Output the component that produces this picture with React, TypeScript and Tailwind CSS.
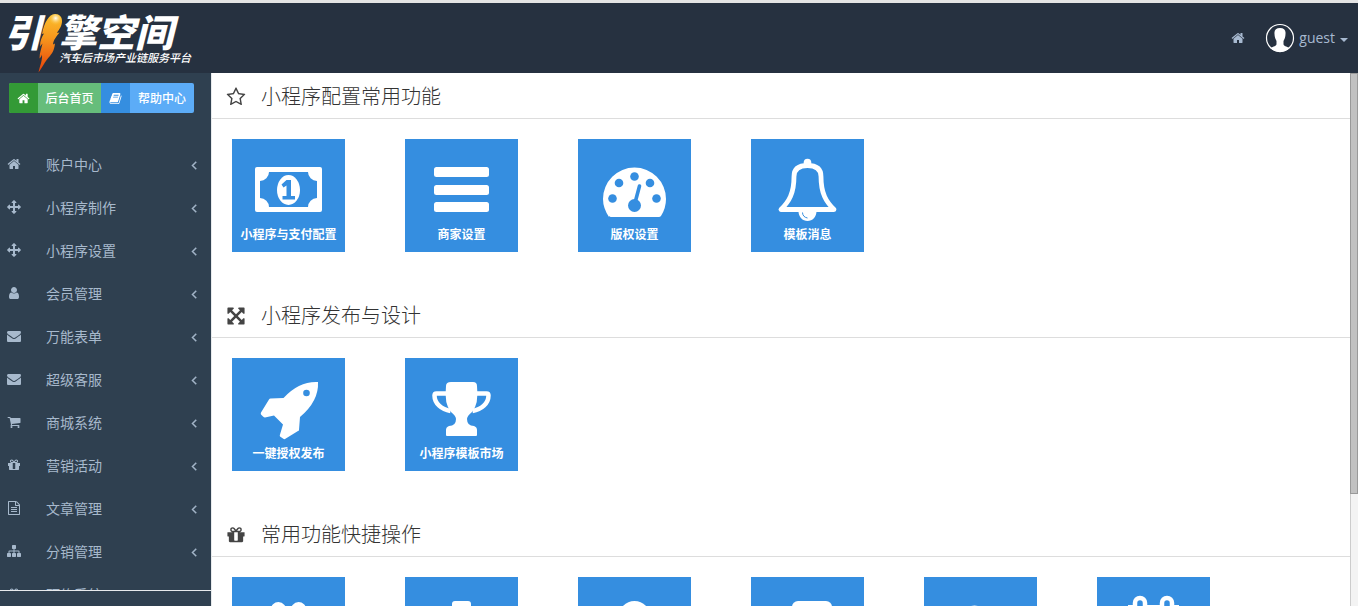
import { ReactNode } from "react";

interface IconProps {
  path: string;
  className?: string;
}

interface Tile {
  label: string;
  icon: ReactNode;
}

interface SectionProps {
  title: string;
  icon: string;
  tiles: Tile[];
}

// Font Awesome 4 shapes, all drawn on a 1792 grid
const icons = {
  home: "M1472 992v480q0 26-19 45t-45 19h-384v-384h-256v384h-384q-26 0-45-19t-19-45v-480q0-1 .5-3t.5-3l575-474 575 474q1 2 1 6zm223-69l-62 74q-8 9-21 11h-3q-13 0-21-7l-692-577-692 577q-12 8-24 7-13-2-21-11l-62-74q-8-10-7-23.5t11-21.5l719-599q32-26 76-26t76 26l244 204v-195q0-14 9-23t23-9h192q14 0 23 9t9 23v408l219 182q10 8 11 21.5t-7 23.5z",
  arrows:
    "M1792 896q0 26-19 45l-256 256q-19 19-45 19t-45-19-19-45v-128h-384v384h128q26 0 45 19t19 45-19 45l-256 256q-19 19-45 19t-45-19l-256-256q-19-19-19-45t19-45 45-19h128v-384h-384v128q0 26-19 45t-45 19-45-19l-256-256q-19-19-19-45t19-45l256-256q19-19 45-19t45 19 19 45v128h384v-384h-128q-26 0-45-19t-19-45 19-45l256-256q19-19 45-19t45 19l256 256q19 19 19 45t-19 45-45 19h-128v384h384v-128q0-26 19-45t45-19 45 19l256 256q19 19 19 45z",
  user: "M1536 1399q0 109-62.5 187t-150.5 78h-854q-88 0-150.5-78t-62.5-187q0-85 8.5-160.5t31.5-152 58.5-131 94-89 134.5-34.5q131 128 313 128t313-128q76 0 134.5 34.5t94 89 58.5 131 31.5 152 8.5 160.5zm-256-887q0 159-112.5 271.5t-271.5 112.5-271.5-112.5-112.5-271.5 112.5-271.5 271.5-112.5 271.5 112.5 112.5 271.5z",
  envelope:
    "M1792 710v794q0 66-47 113t-113 47h-1472q-66 0-113-47t-47-113v-794q44 49 101 87 362 246 497 345 57 42 92.5 65.5t94.5 48 110 24.5h2q51 0 110-24.5t94.5-48 92.5-65.5q170-123 498-345 57-39 100-87zm0-294q0 79-49 151t-122 123q-376 261-468 325-10 7-42.5 31t-54 38.5-52 32.5-57.5 27-50 9h-2q-23 0-50-9t-57.5-27-52-32.5-54-38.5-42.5-31q-91-64-262-182.5t-205-142.5q-62-42-117-115.5t-55-136.5q0-78 41.5-130t118.5-52h1472q65 0 112.5 47t47.5 113z",
  cart: "M704 1536q0 52-38 90t-90 38-90-38-38-90 38-90 90-38 90 38 38 90zm896 0q0 52-38 90t-90 38-90-38-38-90 38-90 90-38 90 38 38 90zm128-1088v512q0 24-16.5 42.5t-40.5 21.5l-1044 122q13 60 13 70 0 16-24 64h920q26 0 45 19t19 45-19 45-45 19h-1024q-26 0-45-19t-19-45q0-11 8-31.5t16-36 21.5-40 15.5-29.5l-177-823h-204q-26 0-45-19t-19-45 19-45 45-19h256q16 0 28.5 6.5t19.5 15.5 13 24.5 8 26 5.5 29.5 4.5 26h1201q26 0 45 19t19 45z",
  gift: "M1056 1356v-716h-320v716q0 25 18 38.5t46 13.5h192q28 0 46-13.5t18-38.5zm-456-844h195l-126-161q-26-31-69-31-40 0-68 28t-28 68 28 68 68 28zm688-96q0-40-28-68t-68-28q-43 0-69 31l-125 161h194q40 0 68-28t28-68zm376 256v320q0 14-9 23t-23 9h-96v416q0 40-28 68t-68 28h-1088q-40 0-68-28t-28-68v-416h-96q-14 0-23-9t-9-23v-320q0-14 9-23t23-9h440q-93 0-158.5-65.5t-65.5-158.5 65.5-158.5 158.5-65.5q107 0 168 77l128 165 128-165q61-77 168-77 93 0 158.5 65.5t65.5 158.5-65.5 158.5-158.5 65.5h440q14 0 23 9t9 23z",
  file: "M1596 380q28 28 48 76t20 88v1152q0 40-28 68t-68 28h-1344q-40 0-68-28t-28-68v-1600q0-40 28-68t68-28h896q40 0 88 20t76 48zm-444-244v376h376q-10-29-22-41l-313-313q-12-12-41-22zm384 1528v-1024h-416q-40 0-68-28t-28-68v-416h-768v1536h1280zm-1024-864q0-14 9-23t23-9h704q14 0 23 9t9 23v64q0 14-9 23t-23 9h-704q-14 0-23-9t-9-23v-64zm736 224q14 0 23 9t9 23v64q0 14-9 23t-23 9h-704q-14 0-23-9t-9-23v-64q0-14 9-23t23-9h704zm0 256q14 0 23 9t9 23v64q0 14-9 23t-23 9h-704q-14 0-23-9t-9-23v-64q0-14 9-23t23-9h704z",
  sitemap:
    "M1792 1248v320q0 40-28 68t-68 28h-320q-40 0-68-28t-28-68v-320q0-40 28-68t68-28h96v-192h-512v192h96q40 0 68 28t28 68v320q0 40-28 68t-68 28h-320q-40 0-68-28t-28-68v-320q0-40 28-68t68-28h96v-192h-512v192h96q40 0 68 28t28 68v320q0 40-28 68t-68 28h-320q-40 0-68-28t-28-68v-320q0-40 28-68t68-28h96v-192q0-52 38-90t90-38h512v-192h-96q-40 0-68-28t-28-68v-320q0-40 28-68t68-28h320q40 0 68 28t28 68v320q0 40-28 68t-68 28h-96v192h512q52 0 90 38t38 90v192h96q40 0 68 28t28 68z",
  angleLeft:
    "M1203 544q0 13-10 23l-393 393 393 393q10 10 10 23t-10 23l-50 50q-10 10-23 10t-23-10l-466-466q-10-10-10-23t10-23l466-466q10-10 23-10t23 10l50 50q10 10 10 23z",
  book: "M1703 478q40 57 18 129l-275 906q-19 64-76.5 107.5t-122.5 43.5h-923q-77 0-148.5-53.5t-99.5-131.5q-24-67-2-127 0-4 3-27t4-37q1-8-3-21.5t-3-19.5q2-11 8-21t16.5-23.5 16.5-23.5q23-38 45-91.5t30-91.5q3-10 .5-30t-.5-28q3-11 17-28t17-23q21-36 42-92t25-90q1-9-2.5-32t.5-28q4-13 22-30.5t22-22.5q19-26 42.5-84.5t27.5-96.5q1-8-3-25.5t-2-26.5q2-8 9-18t18-23 17-21q8-12 16.5-30.5t15-35 16-36 19.5-32 26.5-23.5 36-11.5 47.5 5.5l-1 3q38-9 51-9h761q74 0 114 56t18 130l-274 906q-36 119-71.5 153.5t-128.5 34.5h-869q-27 0-38 15-11 16-1 43 24 70 144 70h923q29 0 56-15.5t35-41.5l300-987q7-22 5-57 38 15 59 43zm-1064 2q-4 13 2 22.5t20 9.5h608q13 0 25.5-9.5t16.5-22.5l21-64q4-13-2-22.5t-20-9.5h-608q-13 0-25.5 9.5t-16.5 22.5zm-83 256q-4 13 2 22.5t20 9.5h608q13 0 25.5-9.5t16.5-22.5l21-64q4-13-2-22.5t-20-9.5h-608q-13 0-25.5 9.5t-16.5 22.5z",
  star: "M1201 1004l306-297-422-62-189-382-189 382-422 62 306 297-73 421 378-199 377 199zm527-357q0 22-26 48l-363 354 86 500q1 7 1 20 0 50-41 50-19 0-40-12l-449-236-449 236q-22 12-40 12-21 0-31.5-14.5t-10.5-35.5q0-6 2-20l86-500-364-354q-25-27-25-48 0-37 56-46l502-73 225-455q19-41 49-41t49 41l225 455 502 73q56 9 56 46z",
  expand:
    "M1411 541l-355 355 355 355 144-144q29-31 70-14 39 17 39 59v448q0 26-19 45t-45 19h-448q-42 0-59-40-17-39 14-69l144-144-355-355-355 355 144 144q31 30 14 69-17 40-59 40h-448q-26 0-45-19t-19-45v-448q0-42 40-59 39-17 69 14l144 144 355-355-355-355-144 144q-19 19-45 19-12 0-24-5-40-17-40-59v-448q0-26 19-45t45-19h448q42 0 59 40 17 39-14 69l-144 144 355 355 355-355-144-144q-31-30-14-69 17-40 59-40h448q26 0 45 19t19 45v448q0 42-39 59-13 5-25 5-26 0-45-19z",
};

const menu = [
  { label: "账户中心", icon: icons.home },
  { label: "小程序制作", icon: icons.arrows },
  { label: "小程序设置", icon: icons.arrows },
  { label: "会员管理", icon: icons.user },
  { label: "万能表单", icon: icons.envelope },
  { label: "超级客服", icon: icons.envelope },
  { label: "商城系统", icon: icons.cart },
  { label: "营销活动", icon: icons.gift },
  { label: "文章管理", icon: icons.file },
  { label: "分销管理", icon: icons.sitemap },
  { label: "预约系统", icon: icons.gift },
];

function Icon({ path, className }: IconProps) {
  return (
    <svg viewBox="0 0 1792 1792" fill="currentColor" className={className} aria-hidden="true">
      <path d={path} />
    </svg>
  );
}

// Drawing area of a tile, 113 x 90, the caption sits under it
function TileArt({ children }: { children: ReactNode }) {
  return (
    <svg viewBox="0 0 113 90" className="block h-[90px] w-full" fill="#fff" aria-hidden="true">
      {children}
    </svg>
  );
}

const commonTiles: Tile[] = [
  {
    label: "小程序与支付配置",
    icon: (
      <TileArt>
        <rect x="23" y="28" width="67" height="45" rx="2" />
        <path d="M37 33h39a9 9 0 0 0 9 9v17a9 9 0 0 0-9 9H37a9 9 0 0 0-9-9V42a9 9 0 0 0 9-9z" fill="#358ee0" />
        <ellipse cx="56.500" cy="51" rx="11.500" ry="15" />
        <path d="M54.500 41h4.500v16h4v3.500H50.500V57h4V46.500l-3 2-2-3z" fill="#358ee0" />
      </TileArt>
    ),
  },
  {
    label: "商家设置",
    icon: (
      <TileArt>
        <rect x="29" y="28" width="55" height="10" rx="2.500" />
        <rect x="29" y="46" width="55" height="10" rx="2.500" />
        <rect x="29" y="63" width="55" height="10" rx="2.500" />
      </TileArt>
    ),
  },
  {
    label: "版权设置",
    icon: (
      <TileArt>
        <path d="M31 78Q25 69 25 60a31.500 31.500 0 0 1 63 0q0 9-5 17-1 1-2 1H33q-1 0-2-1z" />
        <g fill="#358ee0">
          <circle cx="34.500" cy="59.500" r="4.300" />
          <circle cx="41" cy="44" r="4.300" />
          <circle cx="56.500" cy="37.500" r="4.300" />
          <circle cx="72" cy="44" r="4.300" />
          <circle cx="78.500" cy="59.500" r="4.300" />
          <circle cx="56.500" cy="66.500" r="6.500" />
        </g>
        <path d="M57.500 62L61.500 47" stroke="#358ee0" strokeWidth="3.600" strokeLinecap="round" />
      </TileArt>
    ),
  },
  {
    label: "模板消息",
    icon: (
      <TileArt>
        <circle cx="56.500" cy="23.500" r="3.800" />
        <path
          d="M56.500 26.500c-9 0-13.500 4-13.500 11 0 17-5 25-13 33h53c-8-8-13-16-13-33 0-7-4.500-11-13.500-11z"
          fill="none"
          stroke="#fff"
          strokeWidth="4.800"
          strokeLinejoin="round"
        />
        <path d="M47.500 72h18c0 6-4 10-9 10s-9-4-9-10z" />
        <path d="M51.500 73.500c0 3 2 5 5 5.500" fill="none" stroke="#358ee0" strokeWidth="1" />
      </TileArt>
    ),
  },
];

const designTiles: Tile[] = [
  {
    label: "一键授权发布",
    icon: (
      <TileArt>
        <path d="M86 24q1 19-18 35l-1 13q0 1-1 1l-13 8q-1 .500-2-.500l-3-2q-.500-1 0-2l3-10-9-9-9 2q-1 0-2-1l-2-2q-.500-1 0-2l8-13q.500-1 1.500-1l13-.500Q67 23 86 24z" />
        <circle cx="74.500" cy="35" r="3.300" fill="#358ee0" />
      </TileArt>
    ),
  },
  {
    label: "小程序模板市场",
    icon: (
      <TileArt>
        <path d="M46 24h22q4 0 4 4 2 18-5 26-5 4-5 7 0 7 7 7 3 1 3 4v5q0 1-1 1H42q-1 0-1-1v-5q0-3 3-4 7 0 7-7 0-3-5-7-7-8-5-26 0-4 5-4z" />
        <path
          d="M42 35.500H31.500q-2 0-2 2c0 8 7 14 16 15.500M71 35.500h10.500q2 0 2 2c0 8-7 14-16 15.500"
          fill="none"
          stroke="#fff"
          strokeWidth="4.500"
        />
      </TileArt>
    ),
  },
];

const shortcutTiles: Tile[] = [
  {
    label: "营销活动",
    icon: (
      <TileArt>
        <svg x="26" y="15" width="61" height="68" viewBox="0 0 1792 1792">
          <path d={icons.gift} />
        </svg>
      </TileArt>
    ),
  },
  {
    label: "商品管理",
    icon: (
      <TileArt>
        <path d="M50 24h13q3 0 3 3v17h17q3 0 3 3v13q0 3-3 3H66v12q0 3-3 3H50q-3 0-3-3V63H30q-3 0-3-3V47q0-3 3-3h17V27q0-3 3-3z" />
      </TileArt>
    ),
  },
  {
    label: "会员管理",
    icon: (
      <TileArt>
        <circle cx="56.500" cy="40" r="16" />
        <path d="M29 78q0-22 16-23 11 8 23 0 16 1 16 23z" />
      </TileArt>
    ),
  },
  {
    label: "文章管理",
    icon: (
      <TileArt>
        <rect x="41" y="24" width="40" height="54" rx="6" />
      </TileArt>
    ),
  },
  {
    label: "订单管理",
    icon: (
      <TileArt>
        <path d="M47 29q3.500-1 7 0l30 16-34 34-22-30z" />
      </TileArt>
    ),
  },
  {
    label: "预约管理",
    icon: (
      <TileArt>
        <path d="M31 28h51v50H31z" />
        <rect x="38" y="21" width="10" height="18" rx="5" fill="#358ee0" stroke="#fff" strokeWidth="4.500" />
        <rect x="65" y="21" width="10" height="18" rx="5" fill="#358ee0" stroke="#fff" strokeWidth="4.500" />
      </TileArt>
    ),
  },
];

function Logo() {
  return (
    <a href="#" className="flex h-full items-start pl-1 text-white">
      <span className="pt-[10px] text-[38px] leading-[38px] font-black italic">引</span>
      <svg viewBox="0 0 26 60" className="relative mt-[10px] -ml-[5px] h-[60px] w-[26px] shrink-0" aria-hidden="true">
        <defs>
          <linearGradient id="flame" x1="0" y1="0" x2="0" y2="1">
            <stop offset="0" stopColor="#fbc02d" />
            <stop offset="0.4" stopColor="#f7981d" />
            <stop offset="1" stopColor="#e5400a" />
          </linearGradient>
          <radialGradient id="glow" cx="0.55" cy="0.3" r="0.5">
            <stop offset="0" stopColor="#fff" />
            <stop offset="1" stopColor="#fbc02d" stopOpacity="0" />
          </radialGradient>
        </defs>
        <path
          d="M18 1c4.500 0 7.500 3 7 8-.5 5-3.500 8-5 11l2.500-.5c-3 4-6 7-6.500 12l2-1c-1 9-4 11-8 16-3 4-5 8-8.500 13 1.500-7 4-12 3.500-18-.5 2-1.500 3-2.500 4 0-6 2-10 3-15l-2.500 3c0-6 2-10 4-13l-2 .5C7 10 12 1 18 1z"
          fill="url(#flame)"
        />
        <ellipse cx="18" cy="8" rx="7" ry="7" fill="url(#glow)" />
      </svg>
      <span className="-ml-1 flex flex-col pt-[10px]">
        <span className="text-[38px] leading-[38px] font-black italic">擎空间</span>
        <span className="pt-px text-[11px] leading-3 font-medium italic">汽车后市场产业链服务平台</span>
      </span>
    </a>
  );
}

function Section({ title, icon, tiles }: SectionProps) {
  return (
    <section className="pb-10">
      <h2 className="flex h-[46px] items-center gap-[15px] border-b border-[#ddd] pt-[3px] pl-[14px] text-xl font-light text-[#333]">
        <Icon path={icon} className="size-5 text-[#444]" />
        {title}
      </h2>
      <div className="flex gap-[60px] pt-5 pl-5">
        {tiles.map((tile) => (
          <a
            key={tile.label}
            href="#"
            className="h-[113px] w-[113px] shrink-0 bg-[#358ee0] text-center text-xs leading-3 font-bold whitespace-nowrap text-white"
          >
            {tile.icon}
            {tile.label}
          </a>
        ))}
      </div>
    </section>
  );
}

export default function App() {
  return (
    <div className="flex h-screen flex-col overflow-hidden bg-white font-['Open_Sans','Noto_Sans_CJK_SC',sans-serif]">
      <header className="flex h-[73px] shrink-0 items-stretch justify-between border-t-3 border-[#e4e4e4] bg-[#263140]">
        <Logo />
        <nav className="flex items-center pr-[10px] text-sm text-[#a7b9d0]">
          <a href="#" aria-label="首页" className="mr-5">
            <Icon path={icons.home} className="size-[14px]" />
          </a>
          <button type="button" className="flex items-center">
            <svg viewBox="0 0 30 30" className="mr-1 size-[30px]" aria-hidden="true">
              <circle cx="15" cy="15" r="13.500" fill="none" stroke="#fff" strokeWidth="1.200" />
              <path
                d="M15 5c4 0 6 2 5.500 6 0 3-1 5-2 7v3c0 2 3 2.500 6 4a13 13 0 0 1-19 0c3-1.500 6-2 6-4v-3c-1-2-2-4-2-7C9 7 11 5 15 5z"
                fill="#fff"
              />
            </svg>
            guest
            <svg viewBox="0 0 8 4" className="mt-1 ml-[5px] h-1 w-2" fill="currentColor" aria-hidden="true">
              <path d="M0 0h8L4 4z" />
            </svg>
          </button>
        </nav>
      </header>

      <div className="flex min-h-0 flex-1">
        <aside className="flex w-[212px] shrink-0 flex-col border-r border-[#e7eaec] bg-[#2f4050]">
          <div className="flex min-h-0 flex-1 flex-col overflow-hidden">
            <div className="flex px-[9px] pt-[10px] pb-[30px] text-xs font-medium text-white">
              <a href="#" className="flex h-[30px] items-center overflow-hidden rounded-l-xs bg-[#66bd7b]">
                <span className="flex h-full w-[29px] items-center justify-center bg-[#339a36]">
                  <Icon path={icons.home} className="size-[13px]" />
                </span>
                <span className="w-[63px] pt-px text-center">后台首页</span>
              </a>
              <a href="#" className="flex h-[30px] items-center overflow-hidden rounded-r-xs bg-[#5cacf7]">
                <span className="flex h-full w-[29px] items-center justify-center bg-[#358ee0]">
                  <Icon path={icons.book} className="size-[13px]" />
                </span>
                <span className="w-[64px] pt-px text-center">帮助中心</span>
              </a>
            </div>
            <ul className="text-sm text-[#a7b9cc]">
              {menu.map((item) => (
                <li key={item.label}>
                  <a href="#" className="flex h-[43px] items-center pr-[10px] pl-[7px]">
                    <Icon path={item.icon} className="mb-[2px] size-[14px]" />
                    <span className="ml-[25px] flex-1">{item.label}</span>
                    <Icon path={icons.angleLeft} className="size-[14px] stroke-current stroke-[60]" />
                  </a>
                </li>
              ))}
            </ul>
          </div>
          <div className="h-4 shrink-0 border-t border-[#e7eaec]" />
        </aside>

        <main className="min-w-0 flex-1 overflow-hidden">
          <Section title="小程序配置常用功能" icon={icons.star} tiles={commonTiles} />
          <Section title="小程序发布与设计" icon={icons.expand} tiles={designTiles} />
          <Section title="常用功能快捷操作" icon={icons.gift} tiles={shortcutTiles} />
        </main>

        <div className="w-2 shrink-0 border-l border-[#ccc] bg-[#f3f3f3]">
          <div className="-ml-px h-[79%] border border-[#999] bg-[#c1c1c1]" />
        </div>
      </div>
    </div>
  );
}
